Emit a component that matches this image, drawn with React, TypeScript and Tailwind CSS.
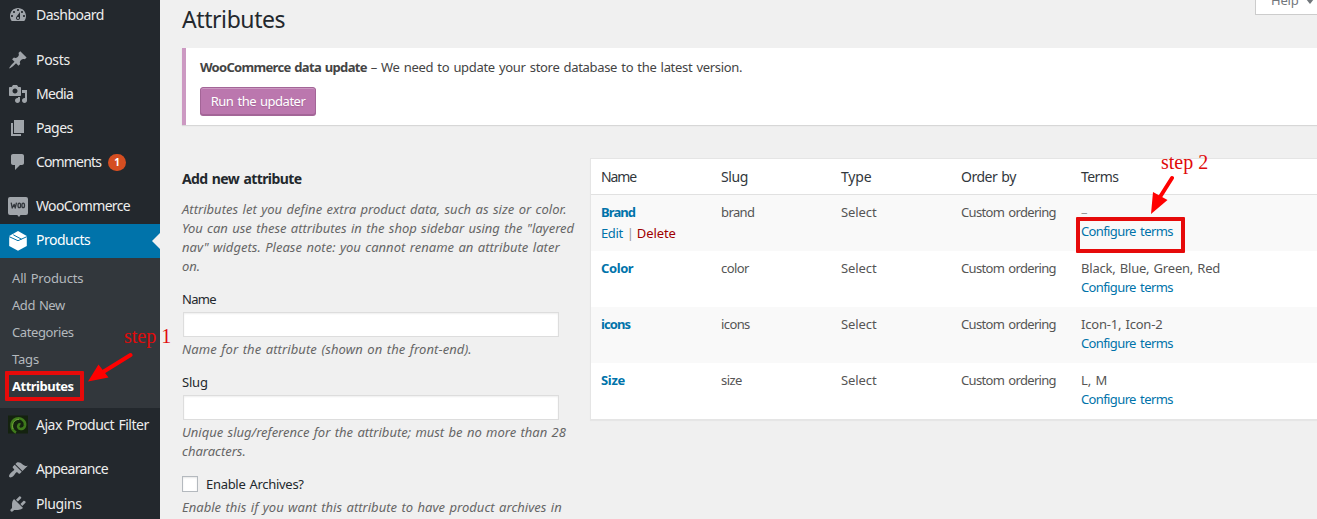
import type { ReactNode } from "react";

const ICONS = {
  dashboard:
    "M3.76 16h12.48c1.1-1.37 1.76-3.11 1.76-5 0-4.42-3.58-8-8-8s-8 3.58-8 8c0 1.89.66 3.63 1.76 5zM10 4c.55 0 1 .45 1 1s-.45 1-1 1-1-.45-1-1 .45-1 1-1zM6 6c.55 0 1 .45 1 1s-.45 1-1 1-1-.45-1-1 .45-1 1-1zm8 0c.55 0 1 .45 1 1s-.45 1-1 1-1-.45-1-1 .45-1 1-1zm-5.37 5.55L12 7v6c0 1.1-.9 2-2 2s-2-.9-2-2c0-.57.24-1.08.63-1.45zM4 10c.55 0 1 .45 1 1s-.45 1-1 1-1-.45-1-1 .45-1 1-1zm12 0c.55 0 1 .45 1 1s-.45 1-1 1-1-.45-1-1 .45-1 1-1zm-5 3c0-.55-.45-1-1-1s-1 .45-1 1 .45 1 1 1 1-.45 1-1z",
  post: "M10.44 3.02l1.82-1.82 6.36 6.35-1.83 1.82c-1.05-.68-2.48-.57-3.41.36l-.75.75c-.92.93-1.04 2.35-.35 3.41l-1.83 1.82-2.41-2.41-2.8 2.79c-.42.42-3.38 2.71-3.8 2.29s1.86-3.39 2.28-3.81l2.79-2.79L4.1 9.36l1.83-1.82c1.05.69 2.48.57 3.4-.36l.75-.75c.93-.92 1.05-2.35.36-3.41z",
  media:
    "M13 11V4c0-.55-.45-1-1-1h-1.67L9 1H5L3.67 3H2c-.55 0-1 .45-1 1v7c0 .55.45 1 1 1h10c.55 0 1-.45 1-1zM7 4.5c1.38 0 2.5 1.12 2.5 2.5S8.38 9.5 7 9.5 4.5 8.38 4.5 7 5.62 4.5 7 4.5zM14 6h5v10.5c0 1.38-1.12 2.5-2.5 2.5S14 17.88 14 16.5s1.12-2.5 2.5-2.5c.17 0 .34.02.5.05V9h-3V6zm-4 8.05V13h2v3.5c0 1.38-1.12 2.5-2.5 2.5S7 17.88 7 16.5 8.12 14 9.5 14c.17 0 .34.02.5.05z",
  page: "M6 15V2h10v13H6zm-1 1h8v2H3V5h2v11z",
  comments: "M5 2h9c1.1 0 2 .9 2 2v7c0 1.1-.9 2-2 2h-2l-5 5v-5H5c-1.1 0-2-.9-2-2V4c0-1.1.9-2 2-2z",
  appearance:
    "M14.48 11.06L7.41 3.99l1.5-1.5c.5-.56 2.3-.47 3.51.32 1.21.8 1.43 1.28 2.91 2.1 1.18.64 2.45 1.26 4.45.85zm-.71.71L6.7 4.7 4.93 6.47c-.39.39-.39 1.02 0 1.41l1.06 1.06c.39.39.39 1.03 0 1.42-.6.6-1.43 1.11-2.21 1.69-.35.26-.7.53-1.01.84C1.43 14.23.4 16.08 1.4 17.07c.99 1 2.84-.03 4.18-1.36.31-.31.58-.66.85-1.02.57-.78 1.08-1.61 1.69-2.21.39-.39 1.02-.39 1.41 0l1.06 1.06c.39.39 1.02.39 1.41 0z",
  plugins:
    "M13.11 4.36L9.87 7.6 8 5.73l3.24-3.24c.35-.34 1.05-.2 1.56.32.52.51.66 1.21.31 1.55zm-8 1.77l.91-1.12 9.01 9.01-1.19.84c-.71.71-2.63 1.16-3.82 1.16H6.14L4.9 17.26c-.59.59-1.54.59-2.12 0-.59-.58-.59-1.53 0-2.12l1.24-1.24v-3.88c0-1.13.4-3.19 1.09-3.89zm7.26 3.97l3.24-3.24c.34-.35 1.04-.21 1.55.31.52.51.66 1.21.31 1.55l-3.24 3.25z",
};

function Dashicon({ name }: { name: keyof typeof ICONS }) {
  return (
    <svg viewBox="0 0 20 20" className="size-5 fill-[#a0a5aa]">
      <path d={ICONS[name]} />
    </svg>
  );
}

function WooIcon() {
  return (
    <svg viewBox="0 0 20 20" className="size-5">
      <path d="M2 0h16a2 2 0 0 1 2 2v14a2 2 0 0 1-2 2h-5.500l-1.500 2-1.800-2H2a2 2 0 0 1-2-2V2a2 2 0 0 1 2-2z" fill="#a0a5aa" />
      <g fill="none" stroke="#32373c" strokeWidth="1.300" strokeLinejoin="round">
        <path d="M3.200 5.600l1 5.400 2-3.600 1 3.600 1.300-5.400" />
        <ellipse cx="11.300" cy="8.400" rx="1.300" ry="2.200" />
        <ellipse cx="15.200" cy="8.400" rx="1.300" ry="2.200" />
      </g>
    </svg>
  );
}

function BoxIcon() {
  return (
    <svg viewBox="0 0 20 20" className="size-5">
      <path d="M10 0l8.800 5v10L10 19.800 1.200 15V5z" fill="#fff" />
      <path d="M1.200 5.700l8.800 4 8.800-4M5.300 3.800l8.200 4.400" fill="none" stroke="#0073aa" strokeWidth="1" />
    </svg>
  );
}

function FilterIcon() {
  return (
    <svg viewBox="0 0 20 20" className="size-5">
      <rect y="0.500" width="20" height="18" fill="#14220f" />
      <path d="M8 17.500C2 14.500 2.200 6 8 3.800c5-1.800 9.800 2 9 6.600-.8 4-5.500 4.600-6.600 2.100-.8-1.800.4-3.600 2-3" fill="none" stroke="#3f7a1c" strokeWidth="2.600" />
      <path d="M5 14C3.500 9 6 4.500 11 4.300" fill="none" stroke="#77a83a" strokeWidth="1" />
    </svg>
  );
}

function MenuItem({ icon, label, track, active, children }: { icon: ReactNode; label: string; track: string; active?: boolean; children?: ReactNode }) {
  return (
    <div className={`flex h-[34px] shrink-0 items-center pl-2 ${active ? "bg-[#0073aa] text-white" : "text-[#eeeeee]"}`}>
      {icon}
      <span className={`ml-2 whitespace-nowrap text-[14px] leading-[18px] ${track}`}>{label}</span>
      {children}
    </div>
  );
}

const SUBMENU = [
  { label: "All Products", style: "tracking-[-0.18px] [word-spacing:1px]" },
  { label: "Add New", style: "tracking-[-0.45px] [word-spacing:1px]" },
  { label: "Categories", style: "tracking-[-0.4px]" },
  { label: "Tags", style: "tracking-[-0.2px]" },
  { label: "Attributes", style: "font-bold text-white tracking-[-0.5px]" },
];

function Sidebar() {
  return (
    <nav className="-mt-[2px] flex w-40 shrink-0 flex-col bg-[#23282d]">
      <MenuItem icon={<Dashicon name="dashboard" />} label="Dashboard" track="tracking-[-0.5px]" />
      <div className="h-[11px] shrink-0" />
      <MenuItem icon={<Dashicon name="post" />} label="Posts" track="tracking-[-0.3px]" />
      <MenuItem icon={<Dashicon name="media" />} label="Media" track="tracking-[-0.7px]" />
      <MenuItem icon={<Dashicon name="page" />} label="Pages" track="tracking-[-0.6px]" />
      <MenuItem icon={<Dashicon name="comments" />} label="Comments" track="tracking-[-0.85px]">
        <span className="ml-[7px] flex h-[17px] w-[18px] items-center justify-center rounded-full bg-[#d54e21] text-[10px] font-bold text-white">1</span>
      </MenuItem>
      <div className="h-[11px] shrink-0" />
      <MenuItem icon={<WooIcon />} label="WooCommerce" track="pb-[2px] tracking-[-0.65px]" />
      <MenuItem icon={<BoxIcon />} label="Products" track="pb-[2px] tracking-[-0.5px]" active>
        <svg viewBox="0 0 8 16" className="ml-auto h-4 w-2 fill-[#f1f1f1]">
          <path d="M8 0v16L0 8z" />
        </svg>
      </MenuItem>
      <div className="flex h-[150px] shrink-0 flex-col bg-[#32373c] pl-3 pt-[7px]">
        {SUBMENU.map((s) => (
          <div key={s.label} className={`h-[27px] text-[13px] leading-[27px] text-[#b4b9be] ${s.style}`}>
            {s.label}
          </div>
        ))}
      </div>
      <MenuItem icon={<FilterIcon />} label="Ajax Product Filter" track="pb-px tracking-[-0.5px] [word-spacing:1.2px]" />
      <div className="h-[11px] shrink-0" />
      <MenuItem icon={<Dashicon name="appearance" />} label="Appearance" track="pb-[2px] tracking-[-0.65px]" />
      <MenuItem icon={<Dashicon name="plugins" />} label="Plugins" track="pb-px tracking-[-0.4px]" />
    </nav>
  );
}

function AddForm() {
  return (
    <form className="w-[400px] shrink-0 text-[13px] leading-[19px] text-[#23282d]">
      <h2 className="mt-[44px] text-[14px] font-bold leading-[20px] tracking-[-0.6px] [word-spacing:1.200px]">Add new attribute</h2>
      <div className="mt-[11px] whitespace-nowrap italic text-[#666666]">
        <div className="tracking-[0.02px] [word-spacing:1px]">Attributes let you define extra product data, such as size or color.</div>
        <div className="tracking-[-0.02px] [word-spacing:1px]">You can use these attributes in the shop sidebar using the "layered</div>
        <div className="tracking-[0.02px] [word-spacing:1px]">nav" widgets. Please note: you cannot rename an attribute later</div>
        <div>on.</div>
      </div>
      <label className="mt-[14px] block tracking-[-0.7px]">Name</label>
      <input className="ml-px mt-[3px] block h-[25px] w-[376px] border border-[#dddddd] bg-white shadow-[inset_0_1px_2px_rgba(0,0,0,0.07)]" />
      <p className="mt-[3px] italic tracking-[0.09px] text-[#666666] [word-spacing:1px]">Name for the attribute (shown on the front-end).</p>
      <label className="mt-[14px] block tracking-[-0.2px]">Slug</label>
      <input className="ml-px mt-[3px] block h-[25px] w-[376px] border border-[#dddddd] bg-white shadow-[inset_0_1px_2px_rgba(0,0,0,0.07)]" />
      <div className="mt-[3px] whitespace-nowrap italic tracking-[-0.01px] text-[#666666] [word-spacing:1px]">
        <div>Unique slug/reference for the attribute; must be no more than 28</div>
        <div>characters.</div>
      </div>
      <div className="mt-[14px] flex items-center">
        <span className="-mt-px size-4 border border-[#b4b9be] bg-white shadow-[inset_0_1px_2px_rgba(0,0,0,0.1)]" />
        <span className="ml-2 tracking-[-0.3px] [word-spacing:1px]">Enable Archives?</span>
      </div>
      <p className="mt-[4px] whitespace-nowrap italic tracking-[0.02px] text-[#666666] [word-spacing:1px]">Enable this if you want this attribute to have product archives in</p>
    </form>
  );
}

const ROWS = [
  { name: "Brand", track: "tracking-[-0.9px]", slug: "brand", terms: "–", termTrack: "text-[#999999]", actions: true },
  { name: "Color", track: "tracking-[-0.4px]", slug: "color", terms: "Black, Blue, Green, Red", termTrack: "tracking-[-0.2px] [word-spacing:1px]" },
  { name: "icons", track: "tracking-[-0.9px]", slug: "icons", terms: "Icon-1, Icon-2", termTrack: "tracking-[-0.2px] [word-spacing:1px]" },
  { name: "Size", track: "tracking-[-0.3px]", slug: "size", terms: "L, M", termTrack: "tracking-[-0.1px] [word-spacing:1px]" },
];

function AttributeTable() {
  return (
    <section className="mt-[33px] w-[760px] shrink-0 self-start border border-[#e5e5e5] bg-white text-[13px] leading-[19px] text-[#555555] shadow-[0_1px_1px_rgba(0,0,0,0.04)]">
      <div className="grid h-[36px] grid-cols-[120px_120px_120px_120px_1fr] items-center border-b border-[#e1e1e1] pb-px pl-[10px] text-[14px] text-[#32373c]">
        <span className="tracking-[-1.1px]">Name</span>
        <span className="tracking-[-0.4px]">Slug</span>
        <span className="tracking-[-0.2px]">Type</span>
        <span className="tracking-[-0.5px] [word-spacing:1px]">Order by</span>
        <span className="tracking-[-0.6px]">Terms</span>
      </div>
      {ROWS.map((r, i) => (
        <div key={r.name} className={`grid h-[56px] grid-cols-[120px_120px_120px_120px_1fr] pl-[10px] pt-2 ${i % 2 ? "bg-white" : "bg-[#f9f9f9]"}`}>
          <div>
            <div className={`font-bold text-[#0073aa] ${r.track}`}>{r.name}</div>
            {r.actions && (
              <div className="mt-[2px] flex gap-[4px] text-[#0073aa]">
                <span className="tracking-[-0.4px]">Edit</span>
                <span className="text-[#999999]">|</span>
                <span className="-ml-px tracking-[-0.1px] text-[#a00000]">Delete</span>
              </div>
            )}
          </div>
          <div className="tracking-[-0.6px]">{r.slug}</div>
          <div className="tracking-[-0.1px]">Select</div>
          <div className="tracking-[-0.68px] [word-spacing:1.5px]">Custom ordering</div>
          <div>
            <div className={r.termTrack}>{r.terms}</div>
            <div className="tracking-[-0.62px] text-[#0073aa] [word-spacing:1.5px]">Configure terms</div>
          </div>
        </div>
      ))}
    </section>
  );
}

function Annotations() {
  return (
    <div className="pointer-events-none absolute inset-0 font-['Liberation_Serif',serif] text-[20px] leading-[22px] text-[#e00b0b]">
      <div className="absolute left-[5px] top-[371px] h-[30px] w-[79px] rounded-[1px] border-4 border-[#e60a0a]" />
      <div className="absolute left-[1076px] top-[217px] h-[36px] w-[109px] rounded-[1px] border-4 border-[#e60a0a]" />
      <span className="absolute left-[124px] top-[325px] whitespace-nowrap">step 1</span>
      <span className="absolute left-[1161px] top-[151px] whitespace-nowrap">step 2</span>
      <svg viewBox="0 0 1317 519" className="absolute inset-0 h-[519px] w-[1317px]" fill="#ff0000" stroke="#ff0000">
        <path d="M103 372L130.500 355M1160 197L1172 178" strokeWidth="4" strokeLinecap="round" />
        <path d="M88 381.500L98.500 364.500L108.500 377.500zM1151 214L1153 192L1167.500 200z" stroke="none" />
      </svg>
    </div>
  );
}

export default function App() {
  return (
    <div className="relative flex h-[519px] w-[1317px] overflow-hidden bg-[#f0f0f0] font-['Noto_Sans',sans-serif]">
      <Sidebar />
      <main className="flex min-w-0 flex-1 flex-col pl-[22px]">
        <header className="flex h-12 shrink-0 items-start justify-between">
          <h1 className="mt-[5px] text-[23px] leading-[29px] tracking-[-0.42px] text-[#23282d]">Attributes</h1>
          <div className="flex h-[15px] w-[62px] items-end gap-[7px] border-b border-l border-[#cccccc] bg-white pl-[15px] text-[13px] leading-[28px] text-[#72777c]">
            <span className="tracking-[-0.2px]">Help</span>
            <svg viewBox="0 0 8 5" className="mb-[10px] h-[5px] w-2 shrink-0 fill-[#72777c]">
              <path d="M0 0h8L4 5z" />
            </svg>
          </div>
        </header>
        <section className="h-[77px] shrink-0 border-l-4 border-[#cc99c2] bg-white pl-[14px] pt-[10px] text-[13px] leading-[19px] text-[#444444] shadow-[0_1px_1px_rgba(0,0,0,0.1)]">
          <p className="whitespace-nowrap">
            <strong className="tracking-[-0.7px] [word-spacing:1.200px]">WooCommerce data update</strong>
            <span className="ml-1 tracking-[-0.32px] [word-spacing:1.100px]">– We need to update your store database to the latest version.</span>
          </p>
          <button className="mt-[10px] block h-[28px] w-[116px] rounded-[3px] border border-[#a36597] bg-[#bb77ae] text-center leading-[24px] tracking-[-0.5px] text-white shadow-[inset_0_1px_0_rgba(255,255,255,0.25),0_1px_0_#a36597] [text-shadow:0_1px_1px_#a36597] [word-spacing:1.200px]">
            Run the updater
          </button>
        </section>
        <div className="flex">
          <AddForm />
          <div className="w-2 shrink-0" />
          <AttributeTable />
        </div>
      </main>
      <Annotations />
    </div>
  );
}
